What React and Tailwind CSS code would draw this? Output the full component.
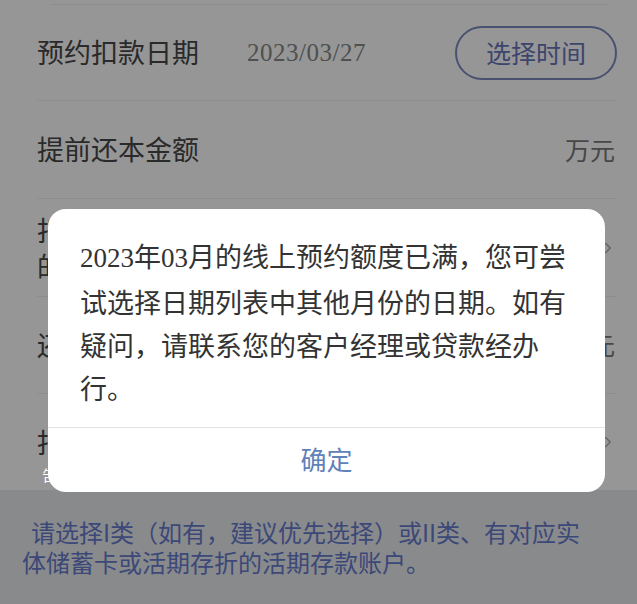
import React from "react";
import { ChevronRight } from "lucide-react";

const Row = ({ children, className = "" }) => (
  <div className={`flex items-center border-b border-[#ececec] ${className}`}>{children}</div>
);

const App = () => {
  return (
    <div className="relative w-[637px] h-[604px] overflow-hidden bg-[#fafafa] font-['Noto_Sans_CJK_SC',sans-serif]">
      {/* page under the dialog */}
      <div className="pl-[37px] pr-[20px]">
        <div className="h-[5px] border-b border-[#ececec] ml-[14px] mr-[8px]" />
        <Row className="h-[96px]">
          <span className="w-[210px] text-[27px] text-[#474747]">预约扣款日期</span>
          <span className="font-['Liberation_Serif',serif] text-[25px] text-[#858585] tracking-[0.5px]">2023/03/27</span>
          <button className="ml-auto h-[54px] w-[162px] rounded-full border-2 border-[#7b87bd] text-[25px] text-[#6673b5]">
            选择时间
          </button>
        </Row>
        <Row className="h-[98px]">
          <span className="text-[27px] text-[#474747]">提前还本金额</span>
          <span className="ml-auto pr-[2px] text-[25px] text-[#777]">万元</span>
        </Row>
        <Row className="h-[98px]">
          <div className="flex flex-col text-[27px] leading-[36px] text-[#474747]">
            <span>扣款账户</span>
            <span>的类型</span>
          </div>
          <ChevronRight className="ml-auto text-[#aaa]" size={18} />
        </Row>
        <Row className="h-[97px]">
          <span className="text-[27px] text-[#474747]">还款总额</span>
          <span className="ml-auto pr-[2px] text-[25px] text-[#777]">元</span>
        </Row>
        <Row className="h-[96px] border-b-0">
          <span className="text-[27px] text-[#474747]">扣款账户</span>
          <ChevronRight className="ml-auto text-[#aaa]" size={18} />
        </Row>
      </div>
      <div className="bg-[#e4e6ea] px-[22px] pt-[27px] pb-[30px] text-[24px] leading-[30px] text-[#6478c8]">
        <p className="indent-[9px]">
          请选择I类（如有，建议优先选择）或II类、有对应实
          <br />
          体储蓄卡或活期存折的活期存款账户。
        </p>
      </div>

      {/* dim layer */}
      <div className="absolute inset-0 bg-black/40" />
      <span className="absolute left-[42px] top-[464px] text-[15px] text-white">告</span>

      {/* dialog */}
      <div className="absolute left-[48px] top-[209px] w-[557px] h-[283px] rounded-[18px] bg-white flex flex-col">
        <p className="px-[32px] pt-[25px] pb-[18px] text-[27px] leading-[43px] text-[#333]">
          <span className="font-['Liberation_Serif',serif]">2023</span>年<span className="font-['Liberation_Serif',serif]">03</span>月的线上预约额度已满，您可尝试选择日期列表中其他月份的日期。如有疑问，请联系您的客户经理或贷款经办行。
        </p>
        <div className="flex-1 flex items-center justify-center pb-[4px] border-t border-[#e3e3e3] text-[26px] text-[#5f82b8]">
          确定
        </div>
      </div>
    </div>
  );
};

export default App;
